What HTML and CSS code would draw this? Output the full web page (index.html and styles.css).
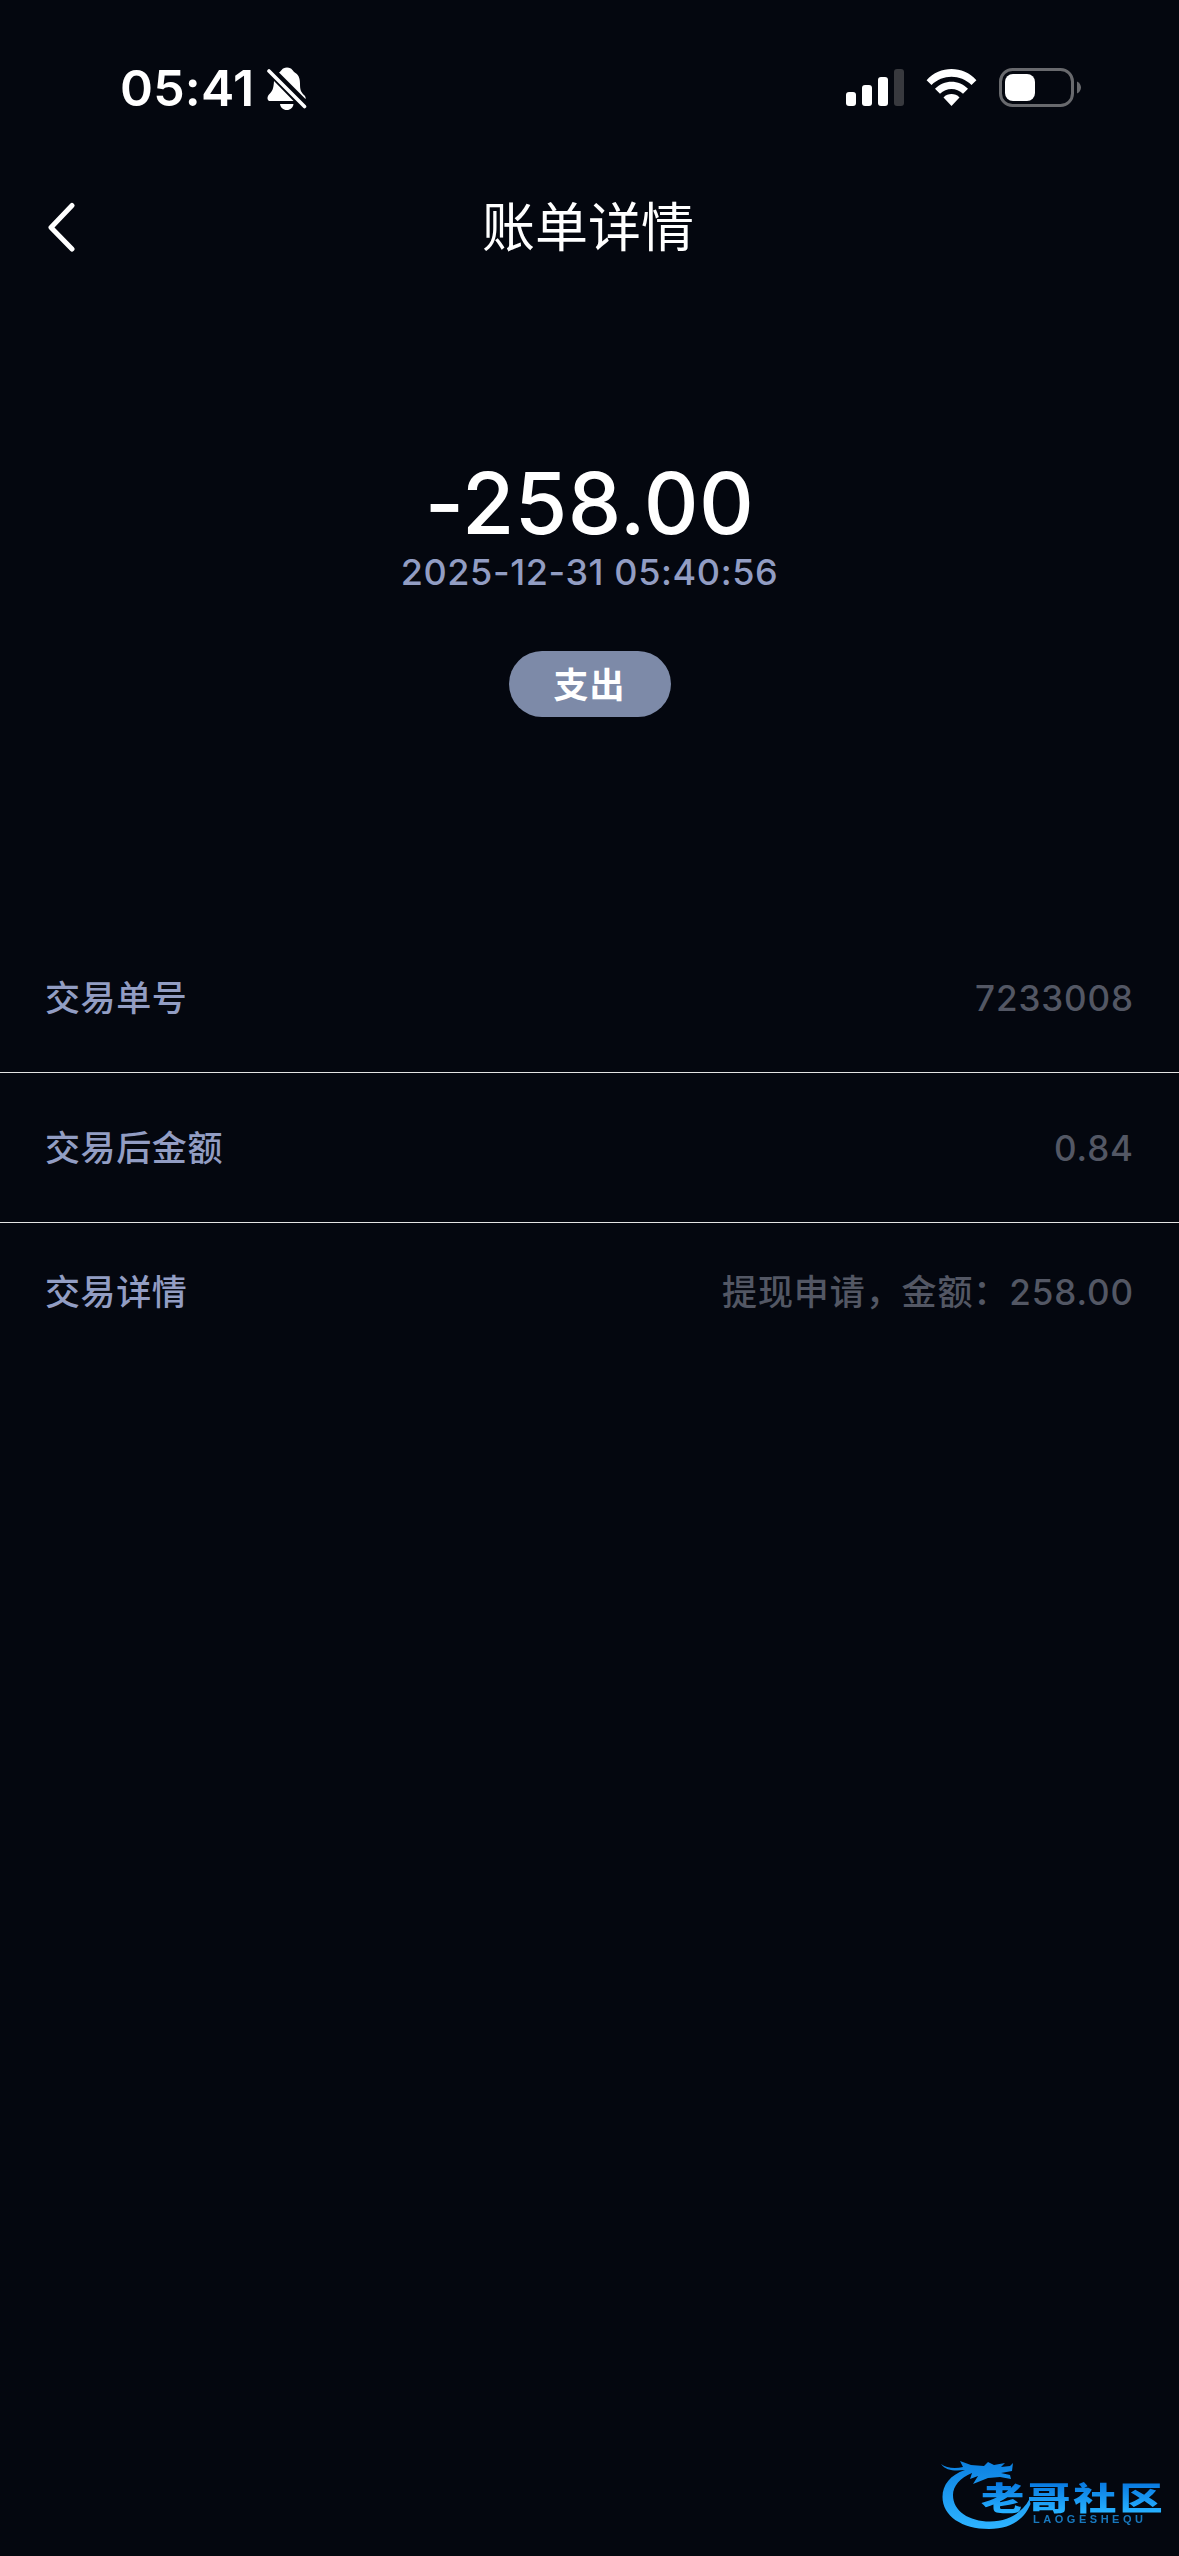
FILE: index.html
```html
<!DOCTYPE html>
<html lang="zh-CN">
<head>
<meta charset="utf-8">
<title>账单详情</title>
<link rel="stylesheet" href="styles.css">
</head>
<body>
<div class="screen">
  <div class="status">
    <div class="status-left">
      <span class="clock">05:41</span>
      <svg class="bell" width="40" height="44" viewBox="0 0 40 44">
        <path fill="#fff" d="M12 5.500C14.500 4.500 14.500 .500 20 .500C25.500 .500 25.500 4.500 28.500 6C32.500 8.500 33 13 33 17C33 23 34 25 37 28C38.500 29.500 39 31 38.500 32L12 5.500Z"/>
        <path fill="#fff" d="M7 14L26.500 34H3.500C-.500 34 0 29.500 2 27.500C5.500 24 6.500 22 7 14Z"/>
        <path fill="#fff" d="M13 37H26.500C26 40.500 23.500 43 19.800 43C16 43 13.500 40.500 13 37Z"/>
        <path stroke="#fff" stroke-width="3.600" stroke-linecap="round" d="M2 4L37.500 39.500"/>
      </svg>
    </div>
    <div class="status-right">
      <svg width="58" height="38" viewBox="0 0 58 38" fill="#fff">
        <rect x="0" y="23" width="10" height="14" rx="3"/>
        <rect x="16" y="16" width="10" height="21" rx="3"/>
        <rect x="32" y="8" width="10" height="29" rx="3"/>
        <rect x="48" y="0" width="10" height="37" rx="3" fill="#38393e"/>
      </svg>
      <svg class="wifi" width="51" height="38" viewBox="0 0 51 38" fill="#fff">
        <path d="M.600 11.200C14-3.700 37-3.700 50.400 11.200L45.500 16C34.500 5 16.500 5 5.500 16Z"/>
        <path d="M9 19.800C18 10.400 33 10.400 42 19.800L37 24.800C30.500 18.400 20.500 18.400 14 24.800Z"/>
        <path d="M17.500 28.400C22 24 29 24 33.500 28.400L25.500 37Z"/>
      </svg>
      <svg class="battery" width="83" height="40" viewBox="0 0 83 40">
        <rect x="1.500" y="1.500" width="72" height="36" rx="12" fill="none" stroke="#68696d" stroke-width="3"/>
        <rect x="6" y="6" width="30" height="27" rx="8" fill="#fff"/>
        <path fill="#68696d" d="M78 13.500C80.500 14.500 82 17 82 19.500S80.500 24.500 78 25.500Z"/>
      </svg>
    </div>
  </div>
  <header class="nav">
    <svg class="back" width="30" height="50" viewBox="0 0 30 50">
      <path d="M26 3.500L5 25.500L26 47" fill="none" stroke="#fff" stroke-width="5" stroke-linecap="round" stroke-linejoin="round"/>
    </svg>
    <h1 class="title">账单详情</h1>
  </header>
  <section class="summary">
    <div class="amount">-258.00</div>
    <div class="date">2025-12-31 05:40:56</div>
    <div class="pill">支出</div>
  </section>
  <section class="list">
    <div class="row"><span class="label">交易单号</span><span class="value">7233008</span></div>
    <div class="row"><span class="label">交易后金额</span><span class="value">0.84</span></div>
    <div class="row row-last"><span class="label">交易详情</span><span class="value">提现申请，金额：258.00</span></div>
  </section>
  <footer class="brand">
    <svg class="brand-logo" width="236" height="85" viewBox="0 0 236 85">
      <defs>
        <linearGradient id="blue" gradientUnits="userSpaceOnUse" x1="0" y1="10" x2="0" y2="76">
          <stop offset="0" stop-color="#0b7fe0"/><stop offset="1" stop-color="#2cb2ff"/>
        </linearGradient>
        <linearGradient id="word" gradientUnits="userSpaceOnUse" x1="0" y1="-27" x2="0" y2="2">
          <stop offset="0" stop-color="#0878e0"/><stop offset="1" stop-color="#26b0ff"/>
        </linearGradient>
      </defs>
      <path fill="url(#blue)" d="M30 20C15 25 7.500 35 7.500 47C7.500 66 27 79 54 79C75 79 89 70 95.500 54L94.500 49C87 63 73 71.500 55 71.500C34 71.500 18 61 18 45C18 36 25 28 37 23L35 29L43 26L38 34L53 28L65 27L76 29L75 25L66 23L77 21L78 13L75 16L66 17L70 13L59 15L53 12L49 16L36 15L25 11L28 17C20 19 11 18 6 14C11 21 20 21 30 20Z"/>
      <text class="brand-name" transform="translate(46 59.500) scale(1.35 1)">老哥社区</text>
      <text class="brand-latin" x="98" y="72.500" textLength="110">LAOGESHEQU</text>
    </svg>
  </footer>
</div>
</body>
</html>
```
FILE: styles.css
```css
body {
  margin: 0;
  background: #04070f;
}

.screen {
  width: 1179px;
  height: 2556px;
  display: flex;
  flex-direction: column;
  overflow: hidden;
  background: #04070f;
  color: #fff;
  font-family: Inter, "Noto Sans CJK SC", sans-serif;
}

.screen svg {
  display: block;
  flex: none;
}

.status {
  height: 176px;
  box-sizing: border-box;
  padding: 0 97px 0 120px;
  display: flex;
  justify-content: space-between;
}

.status-left,
.status-right {
  display: flex;
  align-items: flex-start;
}

.clock {
  margin-top: 58px;
  width: 147px;
  font-size: 50px;
  line-height: 60px;
  font-weight: 600;
  letter-spacing: 0.2px;
}

.bell {
  margin-top: 67px;
}

.status-right {
  padding-top: 69px;
}

.wifi {
  margin-left: 22px;
}

.battery {
  margin: -1px 0 0 22px;
}

.nav {
  height: 102px;
  display: grid;
  grid-template-columns: 89px 1fr 92px;
  align-items: center;
}

.back {
  margin-left: 46px;
}

.title {
  margin: 2px 0 0;
  text-align: center;
  font-size: 53px;
  line-height: 80px;
  font-weight: 400;
}

.summary {
  height: 645px;
  display: flex;
  flex-direction: column;
  align-items: center;
}

.amount {
  margin-top: 175px;
  font-size: 85px;
  line-height: 102px;
  font-weight: 500;
  letter-spacing: 0.4px;
}

.date {
  margin-top: -1px;
  font-size: 36px;
  line-height: 36px;
  font-weight: 500;
  letter-spacing: 0.6px;
  color: #929dc3;
}

.pill {
  margin-top: 61px;
  width: 162px;
  height: 66px;
  border-radius: 33px;
  background: #7d8aa8;
  text-align: center;
  font-size: 35px;
  line-height: 68px;
  font-weight: 700;
  letter-spacing: 1px;
}

.row {
  height: 150px;
  box-sizing: border-box;
  padding: 0 45px;
  display: flex;
  align-items: center;
  justify-content: space-between;
  border-bottom: 1px solid #e4e4e4;
  font-size: 35px;
  line-height: 52px;
  letter-spacing: 0.9px;
}

.row-last {
  height: 137px;
  border-bottom: 0;
}

.label {
  margin-top: 1px;
  letter-spacing: 0.6px;
  font-weight: 500;
  color: #929dc3;
}

.value {
  color: #535764;
  font-weight: 500;
}

.brand {
  margin-top: auto;
  padding: 0 8px 21px 0;
  display: flex;
  justify-content: flex-end;
}

.brand-logo {
  filter: blur(0.6px);
}

.brand-name {
  font: 900 32px "Noto Sans CJK SC", sans-serif;
  letter-spacing: 2.2px;
  fill: url(#word);
}

.brand-latin {
  font: 700 11px "Liberation Sans", sans-serif;
  fill: #1878bd;
}
```
